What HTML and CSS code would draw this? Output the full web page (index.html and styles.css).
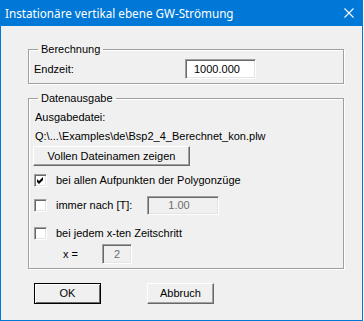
FILE: index.html
```html
<!DOCTYPE html>
<html lang="de">
<head>
    <meta name="viewport" content="width=device-width, initial-scale=1">
    <title>Instationäre vertikal ebene GW-Strömung</title>
    <link rel="stylesheet" href="styles.css">
</head>
<body>
    <div class="window">
        <div class="titlebar">
            <span class="title">Instationäre vertikal ebene GW-Strömung</span>
            <svg class="close" width="10" height="10" viewBox="0 0 10 10">
                <path d="M0.5 0.5 L9.5 9.5 M9.5 0.5 L0.5 9.5" stroke="#fff" stroke-width="1.1" fill="none"/>
            </svg>
        </div>
        <div class="client">
            <fieldset class="group group-calc">
                <legend>Berechnung</legend>
                <div class="row row-end">
                    <span class="label label-end">Endzeit:</span>
                    <div class="field field-end">1000.000</div>
                </div>
            </fieldset>

            <fieldset class="group group-out">
                <legend>Datenausgabe</legend>
                <div class="line line-first">Ausgabedatei:</div>
                <div class="line">Q:\...\Examples\de\Bsp2_4_Berechnet_kon.plw</div>
                <div class="btn btn-wide">Vollen Dateinamen zeigen</div>

                <div class="row row-check row-a">
                    <span class="checkbox">
                        <svg width="7" height="7" viewBox="0 0 7 7">
                            <path d="M0 2 L2 4 L6 0 L6 3 L2 7 L0 5 Z" fill="#000"/>
                        </svg>
                    </span>
                    <span class="check-label">bei allen Aufpunkten der Polygonzüge</span>
                </div>
                <div class="row row-check row-b">
                    <span class="checkbox"></span>
                    <span class="check-label label-interval">immer nach [T]:</span>
                    <div class="field field-disabled field-interval">1.00</div>
                </div>
                <div class="row row-check row-c">
                    <span class="checkbox"></span>
                    <span class="check-label">bei jedem x-ten Zeitschritt</span>
                </div>
                <div class="row row-d">
                    <span class="label label-x">x =</span>
                    <div class="field field-disabled field-x">2</div>
                </div>
            </fieldset>

            <div class="actions">
                <div class="btn btn-default">OK</div>
                <div class="btn btn-cancel">Abbruch</div>
            </div>
        </div>
    </div>
</body>
</html>
```

FILE: styles.css
```css
body {
    margin: 0;
    padding: 0;
    background-color: #ffffff;
    font-family: 'Liberation Sans', Arial, sans-serif;
    font-size: 11px;
    color: #000;
}

.window {
    width: 363px;
    height: 321px;
    box-sizing: border-box;
    border: 1px solid #0078d7;
    border-top: none;
    background-color: #f0f0f0;
}

.titlebar {
    height: 26px;
    margin: 0 -1px;
    background-color: #0078d7;
    color: #fff;
    display: flex;
    align-items: center;
    justify-content: space-between;
    padding: 0 9px 0 5px;
}

.title {
    font-family: 'Noto Sans', sans-serif;
    font-size: 11.7px;
    line-height: 16px;
}

.close {
    display: block;
}

.client {
    padding: 17px 0 0 27px;
}

.group {
    width: 316px;
    box-sizing: border-box;
    margin: 0;
    padding: 0 5px 4px 5px;
    border: 1px solid #a0a0a0;
    box-shadow: inset 1px 1px 0 #fff, 1px 1px 0 #fff;
    min-inline-size: 0;
}

.group legend {
    margin-left: 4px;
    padding: 0 3px;
    line-height: 13px;
}

.group-out {
    margin-top: 8px;
}

.row {
    display: flex;
    align-items: center;
    line-height: 13px;
}

.row-end {
    margin-top: 3px;
    height: 20px;
}

.label-end {
    width: 151px;
}

.field {
    box-sizing: border-box;
    background-color: #fff;
    border-top: 1px solid #a0a0a0;
    border-left: 1px solid #a0a0a0;
    border-right: 1px solid #fff;
    border-bottom: 1px solid #fff;
    box-shadow: inset 1px 1px 0 #696969, inset -1px -1px 0 #e3e3e3;
    line-height: 13px;
    display: flex;
    align-items: center;
}

.field-end {
    width: 71px;
    height: 20px;
    padding-left: 8px;
}

.field-disabled {
    background-color: #f0f0f0;
    color: #6d6d6d;
    justify-content: center;
}

.field-interval {
    width: 72px;
    height: 19px;
    padding-right: 8px;
}

.field-x {
    width: 30px;
    height: 20px;
}

.line {
    height: 19px;
    line-height: 19px;
    padding-left: 1px;
    white-space: nowrap;
}

.line-first {
    margin-top: 3px;
}

.btn {
    box-sizing: border-box;
    height: 20px;
    display: flex;
    align-items: center;
    justify-content: center;
    background-color: #f0f0f0;
    border-top: 1px solid #fff;
    border-left: 1px solid #fff;
    border-right: 1px solid #696969;
    border-bottom: 1px solid #696969;
    box-shadow: inset -1px -1px 0 #a0a0a0;
    line-height: 13px;
}

.btn-wide {
    width: 157px;
    margin-left: -1px;
}

.checkbox {
    box-sizing: border-box;
    width: 13px;
    height: 13px;
    flex: none;
    background-color: #fff;
    border-top: 1px solid #a0a0a0;
    border-left: 1px solid #a0a0a0;
    border-right: 1px solid #fff;
    border-bottom: 1px solid #fff;
    box-shadow: inset 1px 1px 0 #696969, inset -1px -1px 0 #e3e3e3;
    display: flex;
    align-items: center;
    justify-content: center;
}

.checkbox svg {
    display: block;
}

.check-label {
    margin-left: 9px;
    white-space: nowrap;
}

.row-a {
    margin-top: 8px;
    height: 13px;
}

.row-b {
    margin-top: 9px;
    height: 19px;
}

.label-interval {
    width: 91px;
}

.row-c {
    margin-top: 12px;
    height: 13px;
}

.row-d {
    margin-top: 4px;
    height: 20px;
}

.label-x {
    margin-left: 29px;
    width: 39px;
}

.actions {
    display: flex;
    gap: 46px;
    margin-top: 14px;
    padding-left: 6px;
}

.actions .btn {
    width: 67px;
    height: 21px;
}

.btn-default {
    border: 1px solid #000;
    box-shadow: inset 1px 1px 0 #fff, inset -1px -1px 0 #696969;
}
```
